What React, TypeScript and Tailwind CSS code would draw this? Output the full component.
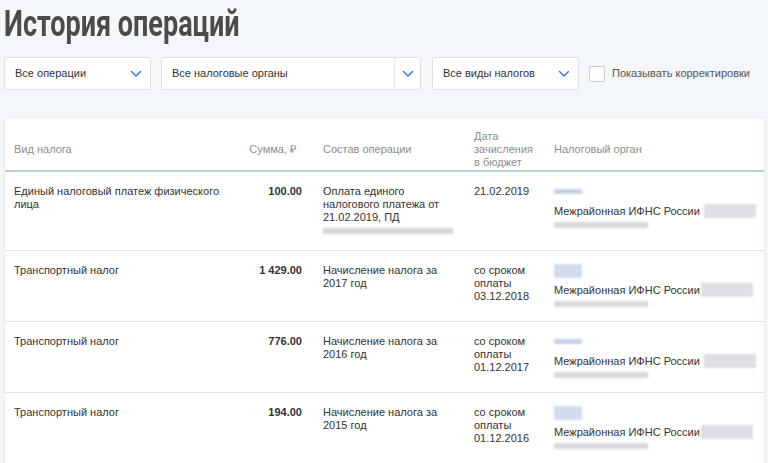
import React from "react";

const Chevron = () => (
  <svg width="12" height="8" viewBox="0 0 12 8" fill="none">
    <path d="M1.5 1.5 L6 6 L10.5 1.5" stroke="#3c7ecb" strokeWidth="1.5" strokeLinecap="round" strokeLinejoin="round" />
  </svg>
);

const Blur = ({ w, h, c = "#d9dde3", className = "" }: { w: number; h: number; c?: string; className?: string }) => (
  <span
    className={"inline-block shrink-0 align-middle blur-[1px] " + className}
    style={{ width: w, height: h, background: c }}
  />
);

type Row = {
  kind: string;
  sum: string;
  op: string;
  date: string;
  topTall: boolean;
  extra?: boolean;
};

const rows: Row[] = [
  {
    kind: "Единый налоговый платеж физического лица",
    sum: "100.00",
    op: "Оплата единого налогового платежа от 21.02.2019, ПД",
    date: "21.02.2019",
    topTall: false,
    extra: true,
  },
  {
    kind: "Транспортный налог",
    sum: "1 429.00",
    op: "Начисление налога за 2017 год",
    date: "со сроком оплаты 03.12.2018",
    topTall: true,
  },
  {
    kind: "Транспортный налог",
    sum: "776.00",
    op: "Начисление налога за 2016 год",
    date: "со сроком оплаты 01.12.2017",
    topTall: false,
  },
  {
    kind: "Транспортный налог",
    sum: "194.00",
    op: "Начисление налога за 2015 год",
    date: "со сроком оплаты 01.12.2016",
    topTall: true,
  },
];

export default function App() {
  return (
    <div className="min-h-screen w-full overflow-hidden bg-[#f3f7fa] font-['Liberation_Sans',Arial,sans-serif] text-[#333]">
      <div className="h-[46px] pl-[4px] pt-[3px]">
        <h1 className="inline-block origin-left scale-x-[0.75] whitespace-nowrap font-['Roboto',sans-serif] text-[36px] font-bold leading-[42px] text-[#4b4b4b]">
          История операций
        </h1>
      </div>

      <div className="mt-[11px] flex items-center pl-[4px]">
        <div className="flex h-[33px] w-[147px] items-center justify-between rounded-[2px] border border-[#dde1e5] bg-white pl-[10px] pr-[8px] text-[11px] text-[#333]">
          <span>Все операции</span>
          <Chevron />
        </div>
        <div className="ml-[10px] flex h-[33px] w-[260px] items-stretch rounded-[2px] border border-[#dde1e5] bg-white text-[11px] text-[#333]">
          <div className="flex flex-1 items-center pl-[10px]">Все налоговые органы</div>
          <div className="flex w-[26px] items-center justify-center border-l border-[#e6e9ec]">
            <Chevron />
          </div>
        </div>
        <div className="ml-[11px] flex h-[33px] w-[147px] items-center justify-between rounded-[2px] border border-[#dde1e5] bg-white pl-[10px] pr-[8px] text-[11px] text-[#333]">
          <span>Все виды налогов</span>
          <Chevron />
        </div>
        <div className="ml-[10px] h-[16px] w-[16px] rounded-[2px] border border-[#c9cdd2] bg-white" />
        <span className="ml-[7px] whitespace-nowrap text-[11px] text-[#555]">Показывать корректировки</span>
      </div>

      <div className="ml-[4px] mt-[27px] w-[761px] border border-[#eaeef2] bg-white text-[11px] leading-[13px]">
        <div className="grid grid-cols-[210px_78px_172px_80px_1fr] items-center border-b-2 border-[#b9d0e8] pb-[1px] pl-[9px] pt-[12px] text-[#8d8d8d]">
          <div>Вид налога</div>
          <div className="pr-[6px] text-right">Сумма, ₽</div>
          <div className="pl-[21px]">Состав операции</div>
          <div className="w-[64px]">Дата зачисления в бюджет</div>
          <div>Налоговый орган</div>
        </div>

        {rows.map((r, i) => (
          <div
            key={i}
            className={
              "grid grid-cols-[210px_78px_172px_80px_1fr] items-start pl-[9px] pt-[13px] " +
              (i < rows.length - 1 ? "border-b border-[#e4e4e4] " : "") +
              (i === 0 ? "h-[79px]" : "h-[71px]")
            }
          >
            <div className="pr-[2px]">{r.kind}</div>
            <div className="text-right font-bold">{r.sum}</div>
            <div className="pl-[21px]">
              <div className="w-[122px]">{r.op}</div>
              {r.extra && <div className="mt-[4px] h-[6px] w-[130px] bg-[#d4d6da] blur-[1px]" />}
            </div>
            <div className="w-[64px]">{r.date}</div>
            <div>
              <div className="flex h-[13px] items-center">
                {r.topTall ? <Blur w={28} h={14} c="#d3dcee" /> : <Blur w={28} h={5} c="#c4cfe6" />}
              </div>
              <div className="mt-[6px] flex items-center whitespace-nowrap">
                <span>Межрайонная ИФНС России</span>
                <Blur w={52} h={14} c="#dcdfe3" className={r.topTall ? "ml-[1px]" : "ml-[4px]"} />
              </div>
              <div className="mt-[4px] flex">
                <Blur w={94} h={6} c="#d6d9de" />
              </div>
            </div>
          </div>
        ))}
      </div>
    </div>
  );
}
